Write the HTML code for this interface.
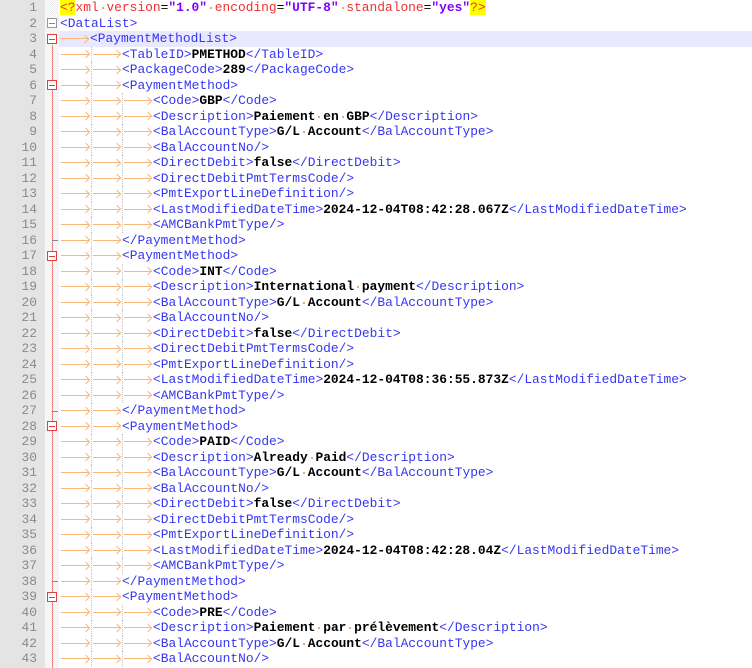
<!DOCTYPE html>
<html><head><meta charset="utf-8"><style>
*{margin:0;padding:0;box-sizing:border-box}
body{width:752px;height:668px;overflow:hidden;background:#fff;position:relative;font-family:"Liberation Mono",monospace;font-size:12.9px}
#gut{position:absolute;left:0;top:0;width:45px;height:668px;background:#e4e4e4}
#fold{position:absolute;left:45px;top:0;width:14px;height:668px;background-color:#fff;background-image:repeating-conic-gradient(#ececec 0 25%,#fff 0 50%);background-size:2px 2px}
.n{position:absolute;left:0;width:37px;text-align:right;color:#8a8a8a;height:15.5px;line-height:15.5px}
.l{position:absolute;left:60px;right:0;height:15.5px;line-height:15.5px;white-space:pre;color:#000}
.cur{background:#e8e8ff;left:59px}
.t{display:inline-block;width:31px;height:15.5px;position:relative;vertical-align:top}
.t::before{content:"";position:absolute;left:1px;right:2px;top:7px;height:1px;background:#f7b77a}
.t::after{content:"";position:absolute;right:2px;top:4.5px;width:5px;height:5px;border-top:1px solid #f7b77a;border-right:1px solid #f7b77a;transform:rotate(45deg)}
.g{border-left:1px dotted #c4c4c4}
.k{color:#3636f0}
.b{font-weight:bold}
.s{display:inline-block;width:7.74px;height:15.5px;position:relative;vertical-align:top}
.s::after{content:"";position:absolute;left:3px;top:7px;width:2px;height:2px;background:#f0a868}
.r{color:#f03030}
.v{color:#8000ff;font-weight:bold}
.y{background:#ffff00;color:#f03030}
.bx{position:absolute;left:47px;width:10px;height:10px;background:#fff;border:1px solid #999}
.bx::after{content:"";position:absolute;left:1px;right:1px;top:3.5px;height:1px;background:#888}
.red{border-color:#e04040}
.red::after{background:#e04040}
#vl{position:absolute;left:51.5px;top:45px;width:1px;height:623px;background:#f08080}
.tk{position:absolute;left:52px;width:6px;height:1px;background:#888}
</style></head><body>
<div id="gut"></div><div id="fold"></div><div id="vl"></div>
<div class="bx" style="top:18px"></div>
<div class="bx red" style="top:34px"></div>
<div class="bx red" style="top:80px"></div>
<div class="bx red" style="top:251px"></div>
<div class="bx red" style="top:421px"></div>
<div class="bx red" style="top:592px"></div>
<div class="tk" style="top:240px"></div>
<div class="tk" style="top:411px"></div>
<div class="tk" style="top:581px"></div>

<div class="n" style="top:0px">1</div><div class="n" style="top:15.5px">2</div><div class="n" style="top:31px">3</div><div class="n" style="top:46.5px">4</div><div class="n" style="top:62px">5</div><div class="n" style="top:77.5px">6</div><div class="n" style="top:93px">7</div><div class="n" style="top:108.5px">8</div><div class="n" style="top:124px">9</div><div class="n" style="top:139.5px">10</div><div class="n" style="top:155px">11</div><div class="n" style="top:170.5px">12</div><div class="n" style="top:186px">13</div><div class="n" style="top:201.5px">14</div><div class="n" style="top:217px">15</div><div class="n" style="top:232.5px">16</div><div class="n" style="top:248px">17</div><div class="n" style="top:263.5px">18</div><div class="n" style="top:279px">19</div><div class="n" style="top:294.5px">20</div><div class="n" style="top:310px">21</div><div class="n" style="top:325.5px">22</div><div class="n" style="top:341px">23</div><div class="n" style="top:356.5px">24</div><div class="n" style="top:372px">25</div><div class="n" style="top:387.5px">26</div><div class="n" style="top:403px">27</div><div class="n" style="top:418.5px">28</div><div class="n" style="top:434px">29</div><div class="n" style="top:449.5px">30</div><div class="n" style="top:465px">31</div><div class="n" style="top:480.5px">32</div><div class="n" style="top:496px">33</div><div class="n" style="top:511.5px">34</div><div class="n" style="top:527px">35</div><div class="n" style="top:542.5px">36</div><div class="n" style="top:558px">37</div><div class="n" style="top:573.5px">38</div><div class="n" style="top:589px">39</div><div class="n" style="top:604.5px">40</div><div class="n" style="top:620px">41</div><div class="n" style="top:635.5px">42</div><div class="n" style="top:651px">43</div>

<div class="l" style="top:0px"><span class="y">&lt;?</span><span class="r">xml</span><span class="s"> </span><span class="r">version</span>=<span class="v">"1.0"</span><span class="s"> </span><span class="r">encoding</span>=<span class="v">"UTF-8"</span><span class="s"> </span><span class="r">standalone</span>=<span class="v">"yes"</span><span class="y">?&gt;</span></div>
<div class="l k" style="top:15.5px">&lt;DataList&gt;</div>
<div class="l cur" style="top:31px"><span class="t"></span><span class="k">&lt;PaymentMethodList&gt;</span></div>
<div class="l" style="top:46.5px"><span class="t"></span><span class="t g"></span><span class="k">&lt;TableID&gt;</span><b>PMETHOD</b><span class="k">&lt;/TableID&gt;</span></div>
<div class="l" style="top:62px"><span class="t"></span><span class="t g"></span><span class="k">&lt;PackageCode&gt;</span><b>289</b><span class="k">&lt;/PackageCode&gt;</span></div>
<div class="l" style="top:77.5px"><span class="t"></span><span class="t g"></span><span class="k">&lt;PaymentMethod&gt;</span></div>
<div class="l" style="top:93px"><span class="t"></span><span class="t g"></span><span class="t g"></span><span class="k">&lt;Code&gt;</span><b>GBP</b><span class="k">&lt;/Code&gt;</span></div>
<div class="l" style="top:108.5px"><span class="t"></span><span class="t g"></span><span class="t g"></span><span class="k">&lt;Description&gt;</span><b>Paiement<span class="s"> </span>en<span class="s"> </span>GBP</b><span class="k">&lt;/Description&gt;</span></div>
<div class="l" style="top:124px"><span class="t"></span><span class="t g"></span><span class="t g"></span><span class="k">&lt;BalAccountType&gt;</span><b>G/L<span class="s"> </span>Account</b><span class="k">&lt;/BalAccountType&gt;</span></div>
<div class="l" style="top:139.5px"><span class="t"></span><span class="t g"></span><span class="t g"></span><span class="k">&lt;BalAccountNo/&gt;</span></div>
<div class="l" style="top:155px"><span class="t"></span><span class="t g"></span><span class="t g"></span><span class="k">&lt;DirectDebit&gt;</span><b>false</b><span class="k">&lt;/DirectDebit&gt;</span></div>
<div class="l" style="top:170.5px"><span class="t"></span><span class="t g"></span><span class="t g"></span><span class="k">&lt;DirectDebitPmtTermsCode/&gt;</span></div>
<div class="l" style="top:186px"><span class="t"></span><span class="t g"></span><span class="t g"></span><span class="k">&lt;PmtExportLineDefinition/&gt;</span></div>
<div class="l" style="top:201.5px"><span class="t"></span><span class="t g"></span><span class="t g"></span><span class="k">&lt;LastModifiedDateTime&gt;</span><b>2024-12-04T08:42:28.067Z</b><span class="k">&lt;/LastModifiedDateTime&gt;</span></div>
<div class="l" style="top:217px"><span class="t"></span><span class="t g"></span><span class="t g"></span><span class="k">&lt;AMCBankPmtType/&gt;</span></div>
<div class="l" style="top:232.5px"><span class="t"></span><span class="t g"></span><span class="k">&lt;/PaymentMethod&gt;</span></div>
<div class="l" style="top:248px"><span class="t"></span><span class="t g"></span><span class="k">&lt;PaymentMethod&gt;</span></div>
<div class="l" style="top:263.5px"><span class="t"></span><span class="t g"></span><span class="t g"></span><span class="k">&lt;Code&gt;</span><b>INT</b><span class="k">&lt;/Code&gt;</span></div>
<div class="l" style="top:279px"><span class="t"></span><span class="t g"></span><span class="t g"></span><span class="k">&lt;Description&gt;</span><b>International<span class="s"> </span>payment</b><span class="k">&lt;/Description&gt;</span></div>
<div class="l" style="top:294.5px"><span class="t"></span><span class="t g"></span><span class="t g"></span><span class="k">&lt;BalAccountType&gt;</span><b>G/L<span class="s"> </span>Account</b><span class="k">&lt;/BalAccountType&gt;</span></div>
<div class="l" style="top:310px"><span class="t"></span><span class="t g"></span><span class="t g"></span><span class="k">&lt;BalAccountNo/&gt;</span></div>
<div class="l" style="top:325.5px"><span class="t"></span><span class="t g"></span><span class="t g"></span><span class="k">&lt;DirectDebit&gt;</span><b>false</b><span class="k">&lt;/DirectDebit&gt;</span></div>
<div class="l" style="top:341px"><span class="t"></span><span class="t g"></span><span class="t g"></span><span class="k">&lt;DirectDebitPmtTermsCode/&gt;</span></div>
<div class="l" style="top:356.5px"><span class="t"></span><span class="t g"></span><span class="t g"></span><span class="k">&lt;PmtExportLineDefinition/&gt;</span></div>
<div class="l" style="top:372px"><span class="t"></span><span class="t g"></span><span class="t g"></span><span class="k">&lt;LastModifiedDateTime&gt;</span><b>2024-12-04T08:36:55.873Z</b><span class="k">&lt;/LastModifiedDateTime&gt;</span></div>
<div class="l" style="top:387.5px"><span class="t"></span><span class="t g"></span><span class="t g"></span><span class="k">&lt;AMCBankPmtType/&gt;</span></div>
<div class="l" style="top:403px"><span class="t"></span><span class="t g"></span><span class="k">&lt;/PaymentMethod&gt;</span></div>
<div class="l" style="top:418.5px"><span class="t"></span><span class="t g"></span><span class="k">&lt;PaymentMethod&gt;</span></div>
<div class="l" style="top:434px"><span class="t"></span><span class="t g"></span><span class="t g"></span><span class="k">&lt;Code&gt;</span><b>PAID</b><span class="k">&lt;/Code&gt;</span></div>
<div class="l" style="top:449.5px"><span class="t"></span><span class="t g"></span><span class="t g"></span><span class="k">&lt;Description&gt;</span><b>Already<span class="s"> </span>Paid</b><span class="k">&lt;/Description&gt;</span></div>
<div class="l" style="top:465px"><span class="t"></span><span class="t g"></span><span class="t g"></span><span class="k">&lt;BalAccountType&gt;</span><b>G/L<span class="s"> </span>Account</b><span class="k">&lt;/BalAccountType&gt;</span></div>
<div class="l" style="top:480.5px"><span class="t"></span><span class="t g"></span><span class="t g"></span><span class="k">&lt;BalAccountNo/&gt;</span></div>
<div class="l" style="top:496px"><span class="t"></span><span class="t g"></span><span class="t g"></span><span class="k">&lt;DirectDebit&gt;</span><b>false</b><span class="k">&lt;/DirectDebit&gt;</span></div>
<div class="l" style="top:511.5px"><span class="t"></span><span class="t g"></span><span class="t g"></span><span class="k">&lt;DirectDebitPmtTermsCode/&gt;</span></div>
<div class="l" style="top:527px"><span class="t"></span><span class="t g"></span><span class="t g"></span><span class="k">&lt;PmtExportLineDefinition/&gt;</span></div>
<div class="l" style="top:542.5px"><span class="t"></span><span class="t g"></span><span class="t g"></span><span class="k">&lt;LastModifiedDateTime&gt;</span><b>2024-12-04T08:42:28.04Z</b><span class="k">&lt;/LastModifiedDateTime&gt;</span></div>
<div class="l" style="top:558px"><span class="t"></span><span class="t g"></span><span class="t g"></span><span class="k">&lt;AMCBankPmtType/&gt;</span></div>
<div class="l" style="top:573.5px"><span class="t"></span><span class="t g"></span><span class="k">&lt;/PaymentMethod&gt;</span></div>
<div class="l" style="top:589px"><span class="t"></span><span class="t g"></span><span class="k">&lt;PaymentMethod&gt;</span></div>
<div class="l" style="top:604.5px"><span class="t"></span><span class="t g"></span><span class="t g"></span><span class="k">&lt;Code&gt;</span><b>PRE</b><span class="k">&lt;/Code&gt;</span></div>
<div class="l" style="top:620px"><span class="t"></span><span class="t g"></span><span class="t g"></span><span class="k">&lt;Description&gt;</span><b>Paiement<span class="s"> </span>par<span class="s"> </span>prélèvement</b><span class="k">&lt;/Description&gt;</span></div>
<div class="l" style="top:635.5px"><span class="t"></span><span class="t g"></span><span class="t g"></span><span class="k">&lt;BalAccountType&gt;</span><b>G/L<span class="s"> </span>Account</b><span class="k">&lt;/BalAccountType&gt;</span></div>
<div class="l" style="top:651px"><span class="t"></span><span class="t g"></span><span class="t g"></span><span class="k">&lt;BalAccountNo/&gt;</span></div>
</body></html>
